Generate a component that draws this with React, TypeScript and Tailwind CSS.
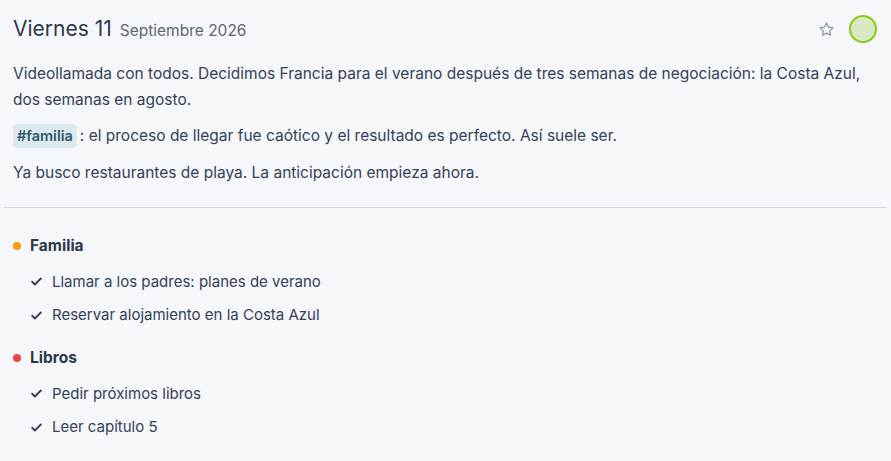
import React from 'react';

const font = { fontFamily: 'Inter, "Noto Sans", sans-serif' };

function Check() {
    return (
        <svg width="13" height="13" viewBox="0 0 24 24" fill="none" stroke="#334155" strokeWidth="3.4" strokeLinecap="round" strokeLinejoin="round">
            <path d="M4 12.5l5 5L20 6.5" />
        </svg>
    );
}

function Group({ name, dot, items }: { name: string; dot: string; items: string[] }) {
    return (
        <div>
            <div className="flex items-center gap-[9px] h-[39px]">
                <span className={`w-[8px] h-[8px] rounded-full ${dot}`} />
                <span className="text-[15.5px] font-bold text-[#2d3748]">{name}</span>
            </div>
            <ul className="pl-[17px]">
                {items.map((t) => (
                    <li key={t} className="flex items-center gap-[9px] h-[33.5px] text-[15px] text-[#334155]">
                        <Check />
                        <span>{t}</span>
                    </li>
                ))}
            </ul>
        </div>
    );
}

export default function App() {
    return (
        <div className="min-h-[461px] bg-[#f5f7fb] px-[4px] pt-[14px]" style={font}>
            <div className="px-[9px]">
                <div className="flex items-center justify-between h-[30px]">
                    <div className="flex items-baseline gap-[8px]">
                        <span className="text-[21px] text-[#2d3748]">Viernes 11</span>
                        <span className="text-[15.5px] text-[#5b6676]">Septiembre 2026</span>
                    </div>
                    <div className="flex items-center gap-[14px] pr-[1px]">
                        <svg width="17" height="17" viewBox="0 0 24 24" fill="none" stroke="#8a97ab" strokeWidth="1.8" strokeLinejoin="round">
                            <path d="M12 2.8l2.8 5.8 6.3.9-4.6 4.4 1.1 6.3L12 17.2l-5.6 3 1.1-6.3L2.9 9.5l6.3-.9z" />
                        </svg>
                        <span className="w-[28px] h-[28px] rounded-full border-2 border-[#84cc16] bg-[#d9eac3]" />
                    </div>
                </div>
                <div className="mt-[17px] text-[15.5px] leading-[26px] text-[#334155]">
                    <p>
                        Videollamada con todos. Decidimos Francia para el verano después de tres semanas de negociación: la Costa Azul,
                        dos semanas en agosto.
                    </p>
                    <p className="mt-[10px]">
                        <span className="inline-block rounded-[4px] bg-[#dde9ef] px-[4px] mr-[3px] leading-[24px] text-[14.5px] font-semibold text-[#2f5a6b]">#familia</span>
                        : el proceso de llegar fue caótico y el resultado es perfecto. Así suele ser.
                    </p>
                    <p className="mt-[11px]">Ya busco restaurantes de playa. La anticipación empieza ahora.</p>
                </div>
            </div>
            <div className="mt-[21px] border-t border-[#d5d9e3]" />
            <div className="px-[9px] pt-[18px] flex flex-col gap-[6px]">
                <Group name="Familia" dot="bg-[#f59e0b]" items={['Llamar a los padres: planes de verano', 'Reservar alojamiento en la Costa Azul']} />
                <Group name="Libros" dot="bg-[#ef4444]" items={['Pedir próximos libros', 'Leer capítulo 5']} />
            </div>
        </div>
    );
}
